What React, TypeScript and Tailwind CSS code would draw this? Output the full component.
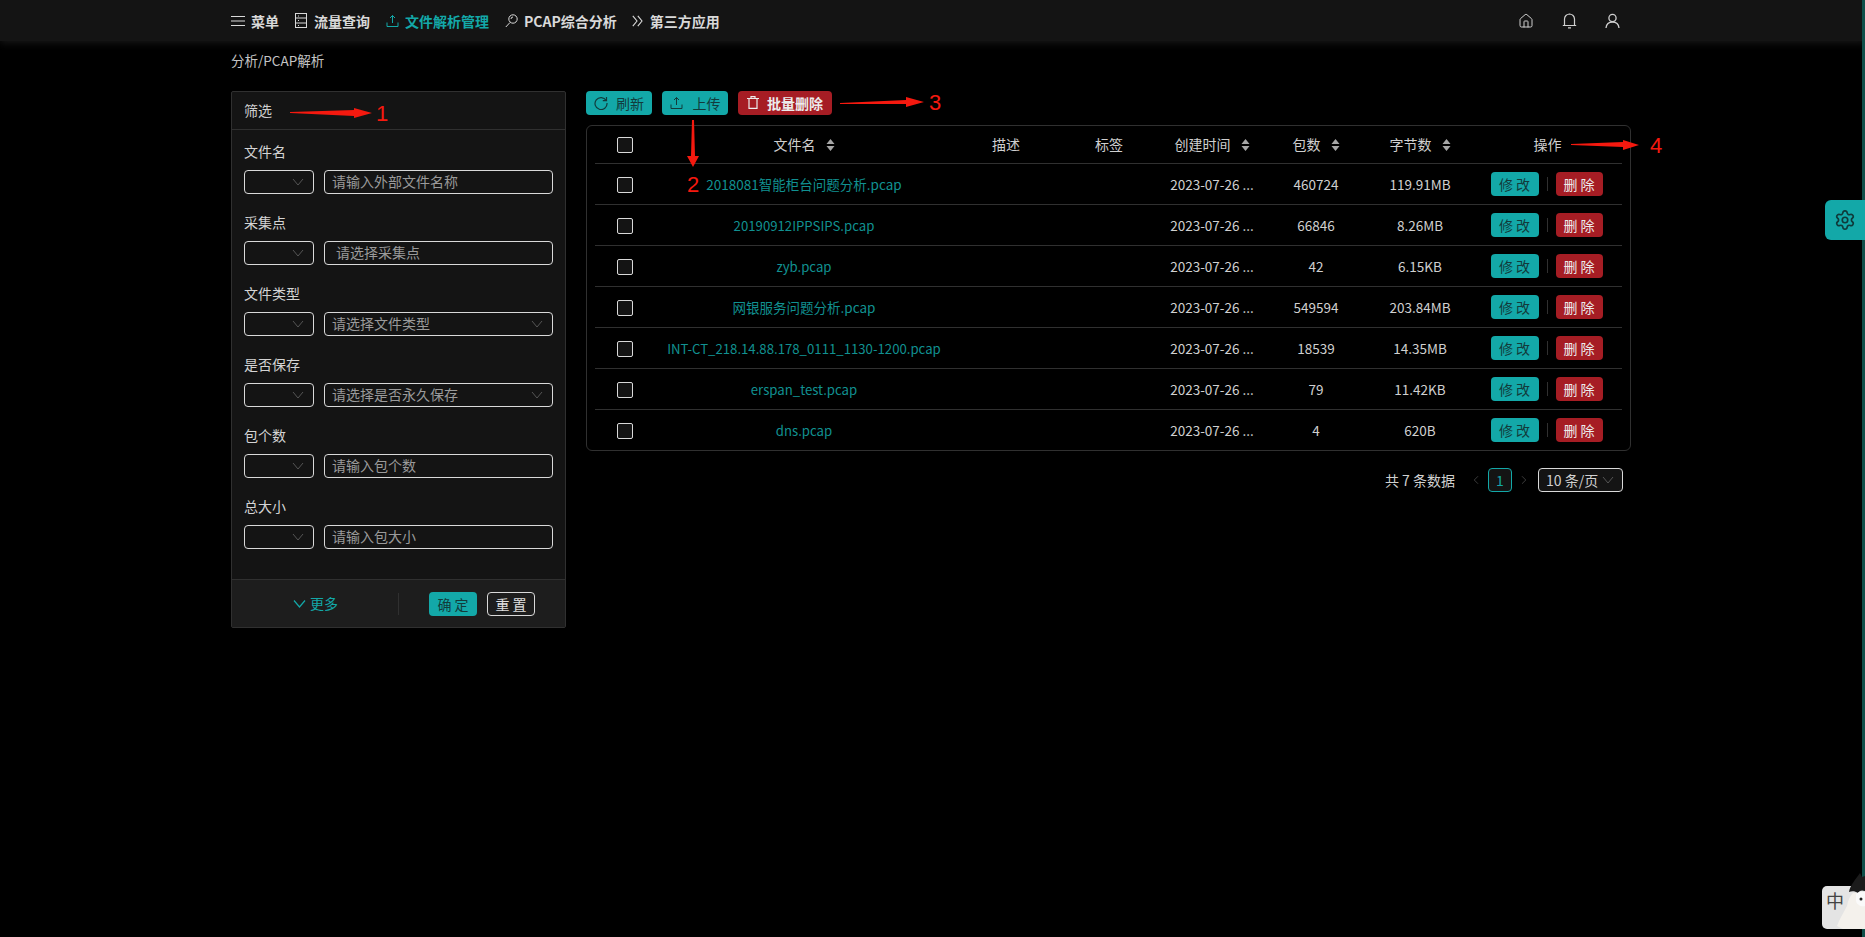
import { Settings, Home, ChevronLeft, ChevronRight } from "lucide-react";

const FONT = "font-['Microsoft_YaHei','Noto_Sans_CJK_SC','Noto_Sans',sans-serif]";

const rows = [
  { name: "2018081智能柜台问题分析.pcap", count: "460724", size: "119.91MB" },
  { name: "20190912IPPSIPS.pcap", count: "66846", size: "8.26MB", latin: true },
  { name: "zyb.pcap", count: "42", size: "6.15KB", latin: true },
  { name: "网银服务问题分析.pcap", count: "549594", size: "203.84MB" },
  { name: "INT-CT_218.14.88.178_0111_1130-1200.pcap", count: "18539", size: "14.35MB", latin: true },
  { name: "erspan_test.pcap", count: "79", size: "11.42KB", latin: true },
  { name: "dns.pcap", count: "4", size: "620B", latin: true },
];

const filters = [
  { label: "文件名", placeholder: "请输入外部文件名称" },
  { label: "采集点", placeholder: "请选择采集点", inset: true },
  { label: "文件类型", placeholder: "请选择文件类型", arrow: true },
  { label: "是否保存", placeholder: "请选择是否永久保存", arrow: true },
  { label: "包个数", placeholder: "请输入包个数" },
  { label: "总大小", placeholder: "请输入包大小" },
];

const GRID = "grid grid-cols-[60px_298px_106px_100px_106px_102px_106px_149px] items-center";

function Down({ className = "" }: { className?: string }) {
  return (
    <svg width="12" height="12" viewBox="0 0 12 12" fill="none" className={className}>
      <path d="M1 3l5 6 5-6" stroke="currentColor" strokeWidth="1" />
    </svg>
  );
}

function Sorter() {
  return (
    <svg width="9" height="14" viewBox="0 0 9 14" className="ml-[10px] text-[#a6a6a6]">
      <path d="M4.5 1l4 5H.5zM.5 8h8l-4 5z" fill="currentColor" />
    </svg>
  );
}

function Checkbox({ className = "" }: { className?: string }) {
  return <span className={`block w-4 h-4 rounded-[2px] border border-[#d9d9d9] bg-[#141414] mx-auto ${className}`} />;
}

function UploadIcon() {
  return (
    <svg width="13" height="13" viewBox="0 0 13 13" fill="none" stroke="currentColor">
      <path d="M6.5 9V1.5M4 4l2.5-2.5L9 4M1 8.5v4h11v-4" />
    </svg>
  );
}

function NavIcon({ kind }: { kind: string }) {
  if (kind === "file") {
    return (
      <svg width="12" height="15" viewBox="0 0 12 15" fill="none" stroke="currentColor">
        <rect x="0.5" y="0.5" width="11" height="14" />
        <path d="M0.5 5h11M0.5 10h11M3 3h1M3 7.5h1M3 12.5h1" />
      </svg>
    );
  }
  if (kind === "upload") return <UploadIcon />;
  if (kind === "search") {
    return (
      <svg width="13" height="14" viewBox="0 0 13 14" fill="none" stroke="currentColor">
        <circle cx="8" cy="5" r="4.2" />
        <path d="M5 8.5L.8 13M6 5a2 2 0 0 1 2-2" />
      </svg>
    );
  }
  if (kind === "double") {
    return (
      <svg width="11" height="12" viewBox="0 0 11 12" fill="none" stroke="currentColor" strokeWidth="1.1">
        <path d="M.8 .8L5 6 .8 11.2M5.8 .8L10 6 5.8 11.2" />
      </svg>
    );
  }
  return (
    <svg width="14" height="12" viewBox="0 0 14 12" fill="none" stroke="currentColor" strokeWidth="1.2">
      <path d="M0 1.5h14M0 6h14M0 10.5h14" />
    </svg>
  );
}

function Arrow({ x, y, w, h, points }: { x: number; y: number; w: number; h: number; points: string }) {
  return (
    <svg width={w} height={h} viewBox={`0 0 ${w} ${h}`} className="absolute" style={{ left: x, top: y }}>
      <polygon points={points} fill="#f5190f" />
    </svg>
  );
}

function Mark({ x, y, text }: { x: number; y: number; text: string }) {
  return (
    <span
      className="absolute text-[22px] leading-none text-[#f5190f] font-['Liberation_Sans',sans-serif]"
      style={{ left: x, top: y }}
    >
      {text}
    </span>
  );
}

export default function App() {
  return (
    <div className={`relative min-h-[937px] h-[937px] overflow-hidden bg-black text-[14px] text-[#d0d0d0] ${FONT}`}>
      <header className="h-[41px] bg-[#141414] shadow-[0_2px_8px_rgba(40,40,40,0.6)] flex items-center justify-between pl-[231px] pr-[245px]">
        <nav className="flex items-center gap-4 font-semibold text-[#d9d9d9] leading-none">
          <span className="flex items-center gap-[6px]"><NavIcon kind="menu" />菜单</span>
          <span className="flex items-center gap-[7px]"><NavIcon kind="file" />流量查询</span>
          <span className="flex items-center gap-[6px] text-[#13a8a8]"><NavIcon kind="upload" />文件解析管理</span>
          <span className="flex items-center gap-[6px]"><NavIcon kind="search" />PCAP综合分析</span>
          <span className="flex items-center gap-[7px] -ml-[1px]"><NavIcon kind="double" />第三方应用</span>
        </nav>
        <div className="flex items-center gap-[28px] text-[#cfcfcf]">
          <Home size={16} strokeWidth={1.5} />
          <svg width="15" height="16" viewBox="0 0 15 16" fill="none" stroke="currentColor" strokeWidth="1.2">
            <path d="M2.5 12.5V6a5 5 0 0 1 10 0v6.5M.8 12.5h13.4M6 14.8h3M6.5 1.2h2" />
          </svg>
          <svg width="15" height="16" viewBox="0 0 15 16" fill="none" stroke="currentColor" strokeWidth="1.3">
            <circle cx="7.5" cy="5" r="3.6" />
            <path d="M1 15c.4-3.6 3-6 6.5-6s6.100 2.400 6.500 6" />
          </svg>
        </div>
      </header>

      <div className="pl-[231px] pt-[8px] h-[50px] text-[13.5px] leading-[22px] text-[#c4c4c4]">分析/PCAP解析</div>

      <main className="flex items-start pl-[231px] gap-5">
        <aside className="w-[335px] h-[537px] flex flex-col rounded-[2px] border border-[#303030] bg-[#141414]">
          <div className="h-[38px] shrink-0 px-3 flex items-center border-b border-[#303030] text-[#cfcfcf]">筛选</div>
          <div className="flex-1 px-3 pt-[11px]">
            {filters.map((f) => (
              <div key={f.label} className="mb-[18px]">
                <div className="leading-[20px] mb-[9px] text-[#d4d4d4]">{f.label}</div>
                <div className="flex gap-[10px]">
                  <div className="w-[70px] h-6 rounded-[4px] border border-[#d9d9d9] flex items-center justify-end pr-[9px] text-[#555]">
                    <Down />
                  </div>
                  <div className={`w-[229px] h-6 rounded-[4px] border border-[#d9d9d9] flex items-center justify-between pr-[9px] text-[#9a9a9a] ${f.inset ? "pl-[11px]" : "pl-[7px]"}`}>
                    <span className="leading-none pb-[2px]">{f.placeholder}</span>
                    {f.arrow && <Down className="text-[#555]" />}
                  </div>
                </div>
              </div>
            ))}
          </div>
          <div className="h-[48px] shrink-0 border-t border-[#303030] bg-[#1d1d1d] flex items-center pl-[61px]">
            <span className="flex items-center gap-[4px] text-[#13a8a8] w-[105px]">
              <svg width="13" height="13" viewBox="0 0 13 13" fill="none" stroke="currentColor" strokeWidth="1.2">
                <path d="M1 3.500l5.500 6.500 5.500-6.500" />
              </svg>
              更多
            </span>
            <span className="w-px h-[22px] bg-[#303030]" />
            <button className="ml-[30px] w-12 h-6 rounded-[4px] bg-[#13a8a8] text-[#123b3b] leading-none">确 定</button>
            <button className="ml-[10px] w-12 h-6 rounded-[4px] border border-[#d9d9d9] text-[#e0e0e0] leading-none">重 置</button>
          </div>
        </aside>

        <section className="w-[1045px]">
          <div className="flex gap-[10px] h-6 mb-[10px] leading-none">
            <button className="w-[66px] h-6 rounded-[4px] bg-[#13a8a8] text-[#123b3b] flex items-center justify-center gap-[8px] pb-px">
              <svg width="14" height="14" viewBox="0 0 14 14" fill="none" stroke="currentColor" strokeWidth="1.2">
                <path d="M12.200 4.500A6 6 0 1 0 13 7M12.500 1v3.700H8.800" />
              </svg>
              刷新
            </button>
            <button className="w-[66px] h-6 rounded-[4px] bg-[#13a8a8] text-[#123b3b] flex items-center justify-center gap-[10px] pb-px">
              <UploadIcon />上传
            </button>
            <button className="w-[94px] h-6 rounded-[4px] bg-[#a61d24] text-[#ececec] font-semibold flex items-center justify-center gap-[8px] pb-px">
              <svg width="12" height="13" viewBox="0 0 12 13" fill="none" stroke="currentColor" strokeWidth="1.2">
                <path d="M0 2.500h12M4 2.500V.7h4v1.800M2 2.500v9.800h8V2.500" />
              </svg>
              批量删除
            </button>
          </div>

          <div className="rounded-[6px] border border-[#303030] px-2 text-center">
            <div className={`${GRID} h-[38px] border-b border-[#303030] text-[#cfcfcf]`}>
              <Checkbox />
              <span className="flex items-center justify-center">文件名<Sorter /></span>
              <span>描述</span>
              <span>标签</span>
              <span className="flex items-center justify-center">创建时间<Sorter /></span>
              <span className="flex items-center justify-center">包数<Sorter /></span>
              <span className="flex items-center justify-center">字节数<Sorter /></span>
              <span>操作</span>
            </div>
            {rows.map((r, i) => (
              <div key={r.name} className={`${GRID} ${i < rows.length - 1 ? "h-[41px] border-b border-[#303030]" : "h-10"} text-[13.500px]`}>
                <Checkbox className="mt-[2px]" />
                <span className={`mt-px text-[#119191] whitespace-nowrap ${r.latin ? "text-[13.2px]" : ""}`}>{r.name}</span>
                <span />
                <span />
                <span className="mt-px whitespace-nowrap">2023-07-26 ...</span>
                <span className="mt-px">{r.count}</span>
                <span className="mt-px">{r.size}</span>
                <span className="flex items-center justify-center pr-[2px] text-[14px]">
                  <button className="w-12 h-6 rounded-[4px] bg-[#13a8a8] text-[#123b3b] leading-none">修 改</button>
                  <span className="w-px h-[14px] mx-2 bg-[#303030]" />
                  <button className="w-[47px] h-6 rounded-[4px] bg-[#a61d24] text-[#ececec] leading-none">删 除</button>
                </span>
              </div>
            ))}
          </div>

          <div className="mt-[17px] flex items-center justify-end pr-2 leading-none">
            <span className="mr-[14px]">共 7 条数据</span>
            <ChevronLeft size={14} strokeWidth={1.2} className="text-[#555]" />
            <span className="mx-[5px] w-6 h-6 rounded-[4px] border border-[#13a8a8] bg-[#141414] flex items-center justify-center text-[#13a8a8]">1</span>
            <ChevronRight size={14} strokeWidth={1.2} className="text-[#555]" />
            <span className="ml-[7px] w-[85px] h-6 rounded-[4px] border border-[#d9d9d9] bg-[#141414] flex items-center justify-between pl-[7px] pr-2">
              10 条/页<Down className="text-[#555]" />
            </span>
          </div>
        </section>
      </main>

      {/* 右侧边缘条 */}
      <div className="absolute right-0 top-0 bottom-0 w-[3px] bg-[#0f4f4a]" />

      {/* 设置悬浮按钮 */}
      <div className="absolute right-0 top-[200px] w-10 h-10 rounded-l-[6px] bg-[#13a8a8] flex items-center justify-center text-[#0f3a3a] pr-[1px]">
        <Settings size={22} strokeWidth={1.8} />
      </div>

      {/* 输入法小部件 */}
      <div className="absolute right-0 top-[886px] w-[43px] h-[43px] rounded-l-[5px] bg-[#e4e4e4] pl-[4px] text-[18px] leading-[28px] text-[#444]">中</div>
      <svg width="28" height="60" viewBox="0 0 28 60" className="absolute right-0 top-[870px]">
        <path d="M0 56c3-8 7-14 10-20 1-6 3-10 6-13h12v36H6z" fill="#f4f1ec" />
        <path d="M12 22c1-7 7-13 11-19l2 4 3-1v15c-3-1-5-1-7 2-3-2-6-2-9-1z" fill="#1b1b1b" />
        <path d="M19 24c3-3 6-3 9-2v14c-4 1-8-1-9-5z" fill="#fafafa" />
        <circle cx="24" cy="29" r="1.500" fill="#222" />
      </svg>

      {/* 红色标注 */}
      <Arrow x={290} y={107} w={83} h={12} points="0,5 0,6 64,9 64,11 82,6 64,1 64,3" />
      <Mark x={376} y={103} text="1" />
      <Arrow x={687} y={120} w={12} h={48} points="5,0 7,0 8,36 12,36 6,47 0,36 4,36" />
      <Mark x={687} y={174} text="2" />
      <Arrow x={840} y={96} w={85} h={12} points="0,7 0,8 66,8 66,11 84,6 66,1 66,4" />
      <Mark x={929} y={92} text="3" />
      <Arrow x={1571} y={139} w={69} h={12} points="0,5 0,6 52,8 52,11 68,6 52,1 52,3" />
      <Mark x={1650} y={135} text="4" />
    </div>
  );
}
